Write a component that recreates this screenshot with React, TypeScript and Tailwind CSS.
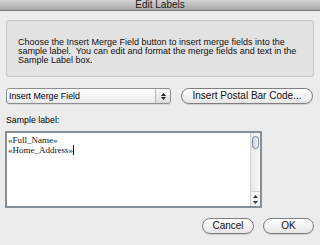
export default function App() {
  return (
    <div
      className="w-[320px] h-[245px] bg-[#ececec] overflow-hidden flex flex-col text-black"
      style={{ fontFamily: '"Liberation Sans", Arial, sans-serif' }}
    >
      {/* title bar */}
      <div className="h-[11px] bg-gradient-to-b from-[#d2d2d2] to-[#a8a8a8] border-b border-[#7a7a7a] flex justify-center overflow-hidden">
        <span className="text-[10px] leading-[10px] text-[#1a1a1a]">Edit Labels</span>
      </div>

      <div className="flex flex-col px-[6px] pt-[9px]">
        {/* info box */}
        <div className="h-[57px] rounded-[3px] border border-[#c6c6c6] bg-[#e2e2e2] pl-[11px] pr-[12px] pt-[17px] text-[9px] leading-[9px] text-[#111]">
          Choose the Insert Merge Field button to insert merge fields into the sample label.&nbsp; You can edit and format the merge fields and text in the Sample Label box.
        </div>

        {/* popup + postal button */}
        <div className="flex items-center mt-[11px] h-[16px]">
          <div className="w-[165px] h-[16px] rounded-[3px] border border-[#8e8e8e] bg-gradient-to-b from-white to-[#e9e9e9] flex items-center shadow-[0_1px_0_#d8d8d8]">
            <span className="flex-1 pl-[2px] text-[8.8px] leading-[10px]">Insert Merge Field</span>
            <div className="w-[15px] h-full border-l border-[#b5b5b5] flex flex-col items-center justify-center gap-[1px] bg-gradient-to-b from-[#f8f8f8] to-[#dcdcdc] rounded-r-[3px]">
              <svg width="5" height="3" viewBox="0 0 5 3"><path d="M2.5 0 L5 3 L0 3 Z" fill="#222" /></svg>
              <svg width="5" height="3" viewBox="0 0 5 3"><path d="M0 0 L5 0 L2.5 3 Z" fill="#222" /></svg>
            </div>
          </div>
          <button className="ml-[10px] w-[132px] h-[16px] rounded-full border border-[#7e7e7e] bg-gradient-to-b from-white to-[#e6e6e6] text-[10px] leading-[10px] text-[#111] shadow-[0_1px_0_#d0d0d0]">
            Insert Postal Bar Code...
          </button>
        </div>

        <div className="mt-[11px] text-[8.8px] leading-[10px]">Sample label:</div>

        {/* text area */}
        <div className="mt-[6px] -ml-[1px] w-[257px] h-[77px] border-2 border-[#868e96] bg-white flex">
          <div
            className="flex-1 pl-[1px] pt-[3px] text-[9px] leading-[9px] text-[#111]"
            style={{ fontFamily: '"Liberation Serif", serif' }}
          >
            <div>«Full_Name»</div>
            <div className="flex items-center">
              «Home_Address»<span className="inline-block w-[1px] h-[10px] bg-black" />
            </div>
          </div>
          <div className="w-[10px] border-l border-[#d2d2d2] bg-gradient-to-r from-[#e8e8e8] to-[#f8f8f8] flex flex-col items-center">
            <div className="mt-[3px] w-[7px] h-[13px] rounded-full border border-[#7a8696] bg-gradient-to-r from-[#c9d2dc] to-[#eef2f6]" />
            <div className="flex-1" />
            <div className="w-full h-[15px] border-t border-[#d0d0d0] flex flex-col items-center justify-center gap-[3px] bg-[#f4f4f4]">
              <svg width="5" height="3" viewBox="0 0 5 3"><path d="M2.5 0 L5 3 L0 3 Z" fill="#333" /></svg>
              <svg width="5" height="3" viewBox="0 0 5 3"><path d="M0 0 L5 0 L2.5 3 Z" fill="#333" /></svg>
            </div>
          </div>
        </div>

        {/* buttons */}
        <div className="flex justify-end mt-[10px] gap-[9px]">
          <button className="w-[52px] h-[16px] rounded-full border border-[#7e7e7e] bg-gradient-to-b from-white to-[#e6e6e6] text-[10px] leading-[10px] text-[#111] shadow-[0_1px_0_#d0d0d0]">
            Cancel
          </button>
          <button className="w-[51px] h-[16px] rounded-full border border-[#7e7e7e] bg-gradient-to-b from-white to-[#e6e6e6] text-[10px] leading-[10px] text-[#111] shadow-[0_1px_0_#d0d0d0]">
            OK
          </button>
        </div>
      </div>
    </div>
  );
}
